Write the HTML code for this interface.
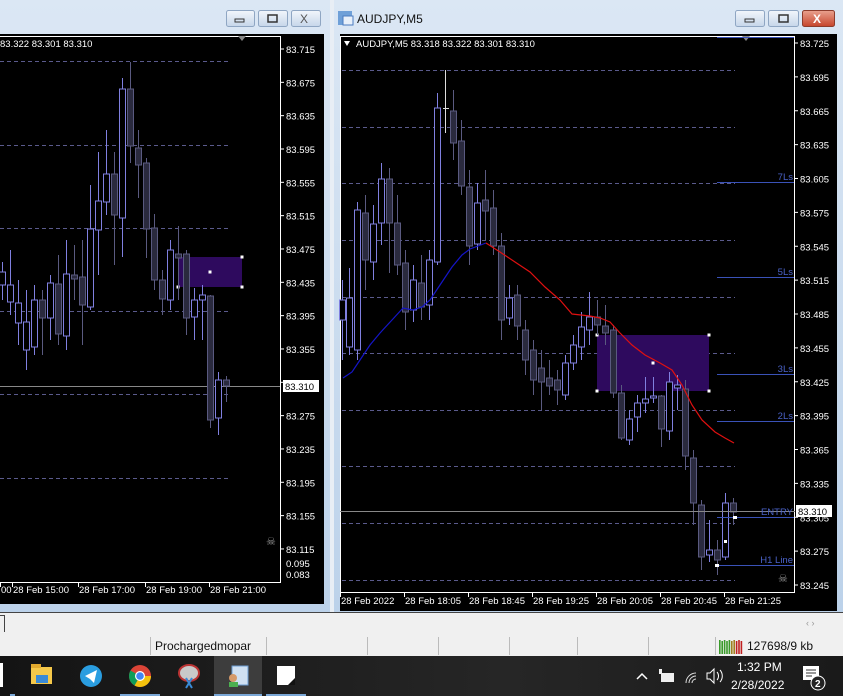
<!DOCTYPE html>
<html><head><meta charset="utf-8"><style>
html,body{margin:0;padding:0;width:843px;height:696px;overflow:hidden;background:#dfe8f2;font-family:"Liberation Sans",sans-serif;}
svg text{font-family:"Liberation Sans",sans-serif;}
</style></head><body>
<svg id="s" width="843" height="696" xmlns="http://www.w3.org/2000/svg">
<defs>
<linearGradient id="tb" x1="0" y1="0" x2="0" y2="1"><stop offset="0" stop-color="#dbe7f4"/><stop offset="1" stop-color="#bcd2ea"/></linearGradient>
<linearGradient id="btn" x1="0" y1="0" x2="0" y2="1"><stop offset="0" stop-color="#f2f6fb"/><stop offset="1" stop-color="#c6d6ea"/></linearGradient>
<linearGradient id="cls" x1="0" y1="0" x2="0" y2="1"><stop offset="0" stop-color="#e9a28f"/><stop offset="1" stop-color="#c6442b"/></linearGradient>
<linearGradient id="task" x1="0" y1="0" x2="1" y2="0"><stop offset="0" stop-color="#141414"/><stop offset="0.6" stop-color="#262626"/><stop offset="1" stop-color="#1a1a1a"/></linearGradient>
</defs>
<!-- background -->
<rect x="0" y="0" width="843" height="612" fill="#e8eef5"/>
<!-- left window -->
<rect x="0" y="0" width="330" height="612" fill="url(#tb)"/>
<rect x="0" y="34" width="324" height="570" fill="#000"/>
<g stroke="#8fa6c3" fill="url(#btn)"><rect x="226.5" y="10.5" width="28" height="16" rx="2"/><rect x="258.5" y="10.5" width="29" height="16" rx="2"/><rect x="291.5" y="10.5" width="29" height="16" rx="2"/></g>
<rect x="235" y="19" width="9" height="3" fill="none" stroke="#333"/>
<rect x="268" y="15" width="9" height="7" fill="none" stroke="#333" stroke-width="1.5"/>
<text x="300" y="23" font-size="12" fill="#555">X</text>
<!-- right window -->
<rect x="334" y="0" width="509" height="612" fill="url(#tb)"/>
<rect x="340" y="34" width="497" height="577" fill="#000"/>
<rect x="338" y="11" width="14" height="14" fill="#6fa0d8"/><rect x="343" y="16" width="10" height="9" fill="#e8f0fa" stroke="#4b7bc0"/>
<text x="357" y="23" font-size="12" fill="#111">AUDJPY,M5</text>
<g stroke="#8fa6c3"><rect x="735.5" y="10.5" width="29" height="16" rx="2" fill="url(#btn)"/><rect x="768.5" y="10.5" width="30" height="16" rx="2" fill="url(#btn)"/><rect x="802.5" y="10.5" width="32" height="16" rx="2" fill="url(#cls)" stroke="#8d3c2c"/></g>
<rect x="745" y="19" width="9" height="3" fill="none" stroke="#333"/>
<rect x="779" y="15" width="9" height="7" fill="none" stroke="#333" stroke-width="1.5"/>
<text x="813" y="23" font-size="12" font-weight="bold" fill="#fff">X</text>
<!-- left plot border -->
<polyline points="0,36.5 280.5,36.5 280.5,582.5 0,582.5" fill="none" stroke="#fff"/>
<text x="0" y="47" font-size="9.5" fill="#fff">83.322 83.301 83.310</text>
<polygon points="238,36 246,36 242,41" fill="#888"/>
<!-- right plot border -->
<rect x="340.5" y="36.5" width="454" height="556" fill="none" stroke="#fff"/>
<polygon points="344,41 350,41 347,46" fill="#fff"/>
<text x="356" y="47" font-size="9.5" fill="#fff">AUDJPY,M5  83.318 83.322 83.301 83.310</text>
<polygon points="742,36 750,36 746,41" fill="#888"/>
<g id="g"></g>
<!-- tab bar -->
<rect x="0" y="612" width="843" height="21" fill="#f0f0f0"/>
<line x1="0" y1="612.5" x2="843" y2="612.5" stroke="#444"/>
<path d="M0,615.5 H4.5 V632" fill="none" stroke="#444"/>
<text x="806" y="626" font-size="9" fill="#999">‹   ›</text>
<!-- status -->
<rect x="0" y="633" width="843" height="23" fill="#f0f0f0"/>
<g stroke="#bbb"><line x1="150.5" y1="637" x2="150.5" y2="655"/><line x1="266.5" y1="637" x2="266.5" y2="655"/><line x1="367.5" y1="637" x2="367.5" y2="655"/><line x1="438.5" y1="637" x2="438.5" y2="655"/><line x1="509.5" y1="637" x2="509.5" y2="655"/><line x1="577.5" y1="637" x2="577.5" y2="655"/><line x1="648.5" y1="637" x2="648.5" y2="655"/><line x1="715.5" y1="637" x2="715.5" y2="655"/></g>
<text x="155" y="650" font-size="12" fill="#111">Prochargedmopar</text>
<g id="bars"></g>
<text x="747" y="650" font-size="12" fill="#111">127698/9 kb</text>
<!-- taskbar -->
<rect x="0" y="656" width="843" height="40" fill="url(#task)"/>
<rect x="214" y="656" width="48" height="40" fill="#3d3d3d"/>
<rect x="0" y="663" width="3" height="24" fill="#fff"/>
<rect x="10" y="694" width="5" height="2" fill="#7aa7d6"/>
<rect x="120" y="694" width="40" height="2" fill="#7aa7d6"/><rect x="214" y="694" width="48" height="2" fill="#7aa7d6"/><rect x="266" y="694" width="40" height="2" fill="#7aa7d6"/>
<!-- explorer -->
<rect x="31" y="667" width="21" height="17" fill="#f5c84a"/><rect x="31" y="664" width="10" height="4" fill="#e2a92e"/><rect x="36" y="675" width="12" height="8" fill="#3a8ad6"/>
<!-- telegram -->
<circle cx="91" cy="676" r="11" fill="#2a9de0"/><path d="M85,676 L97,670 L94,683 L90,679 Z" fill="#fff"/>
<!-- chrome -->
<circle cx="140" cy="676" r="11" fill="#db4437"/><path d="M140,676 L151,676 A11,11 0 0 1 134.5,685.5 Z" fill="#f4c20d"/><path d="M140,676 L134.5,685.5 A11,11 0 0 1 130.5,670.5 Z" fill="#0f9d58"/><circle cx="140" cy="676" r="5" fill="#fff"/><circle cx="140" cy="676" r="3.8" fill="#4285f4"/>
<!-- snip -->
<ellipse cx="189" cy="673" rx="10" ry="8" fill="#c9c9c9" stroke="#b33" stroke-width="2"/><path d="M186,678 L192,688 M192,678 L186,688" stroke="#3a8ad6" stroke-width="2"/>
<!-- mt4 -->
<rect x="232" y="666" width="16" height="19" fill="#cfe0f2" stroke="#6b9bd1"/><circle cx="233" cy="678" r="4" fill="#d59a6a"/><rect x="229" y="682" width="9" height="5" fill="#4caf50"/>
<!-- notepad-ish -->
<rect x="277" y="666" width="18" height="19" fill="#fff"/><path d="M288,685 L295,678 L295,685 Z" fill="#111"/>
<!-- tray -->
<path d="M637,679 L642,674 L647,679" fill="none" stroke="#fff" stroke-width="1.5"/>
<rect x="661" y="673" width="13" height="9" fill="#f0f0f0"/><rect x="659" y="669" width="3" height="5" fill="#f0f0f0"/>
<path d="M686,683 A10,10 0 0 1 696,673 M689,683 A7,7 0 0 1 696,676 M692,683 A4,4 0 0 1 696,679" fill="none" stroke="#ddd" stroke-width="1"/>
<path d="M707,673 L710,673 L714,669 L714,683 L710,679 L707,679 Z" fill="none" stroke="#fff"/><path d="M717,672 A6,6 0 0 1 717,680 M720,670 A9,9 0 0 1 720,682" fill="none" stroke="#fff"/>
<text x="737" y="671" font-size="12" fill="#fff">1:32 PM</text>
<text x="731" y="689" font-size="12" fill="#fff">2/28/2022</text>
<rect x="803" y="666" width="16" height="14" fill="#fff"/><path d="M806,670 H816 M806,673 H816 M806,676 H812" stroke="#333"/>
<circle cx="818" cy="683" r="7" fill="#222" stroke="#fff"/><text x="815" y="687" font-size="10" fill="#fff" font-weight="bold">2</text>
</svg>
<script>
var g=document.getElementById('g'),NS='http://www.w3.org/2000/svg',h='';
function E(s){h+=s;}
// left grid
[61,145,228,311,394,478].forEach(function(y){E('<line x1="0" y1="'+(y+.5)+'" x2="228" y2="'+(y+.5)+'" stroke="#5a5a8c" stroke-dasharray="4,3"/>');});
// right grid
[70,127,183,240,297,353,410,466,523,580].forEach(function(y){E('<line x1="342" y1="'+(y+.5)+'" x2="735" y2="'+(y+.5)+'" stroke="#5a5a8c" stroke-dasharray="4,3"/>');});
// left axis
var lp=['83.715','83.675','83.635','83.595','83.555','83.515','83.475','83.435','83.395','83.355','83.315','83.275','83.235','83.195','83.155','83.115'];
lp.forEach(function(t,i){var y=49+i*33.33;E('<line x1="281" y1="'+y+'" x2="284" y2="'+y+'" stroke="#fff"/><text x="286" y="'+(y+4)+'" font-size="9.5" fill="#fff">'+t+'</text>');});
E('<text x="286" y="567" font-size="9.5" fill="#fff">0.095</text><text x="286" y="578" font-size="9.5" fill="#fff">0.083</text>');
// right axis
var rp=['83.725','83.695','83.665','83.635','83.605','83.575','83.545','83.515','83.485','83.455','83.425','83.395','83.365','83.335','83.305','83.275','83.245'];
rp.forEach(function(t,i){var y=43+i*33.875;E('<line x1="795" y1="'+y+'" x2="798" y2="'+y+'" stroke="#fff"/><text x="800" y="'+(y+4)+'" font-size="9.5" fill="#fff">'+t+'</text>');});
// left time
[['00',0],['28 Feb 15:00',12],['28 Feb 17:00',78],['28 Feb 19:00',145],['28 Feb 21:00',209]].forEach(function(a){E('<line x1="'+(a[1]+.5)+'" y1="583" x2="'+(a[1]+.5)+'" y2="587" stroke="#fff"/><text x="'+(a[1]+1)+'" y="593" font-size="9.5" fill="#fff">'+a[0]+'</text>');});
[['28 Feb 2022',340],['28 Feb 18:05',404],['28 Feb 18:45',468],['28 Feb 19:25',532],['28 Feb 20:05',596],['28 Feb 20:45',660],['28 Feb 21:25',724]].forEach(function(a){E('<line x1="'+(a[1]+.5)+'" y1="593" x2="'+(a[1]+.5)+'" y2="597" stroke="#fff"/><text x="'+(a[1]+1)+'" y="604" font-size="9.5" fill="#fff">'+a[0]+'</text>');});
function C(x,o,c,hi,lo){var bull=c<o;var t=Math.min(o,c),b=Math.max(o,c);if(b-t<2)b=t+2;hi=hi||t-8;lo=lo||b+8;
var col=bull?'#8080e0':'#5a5a80';E('<line x1="'+(x+.5)+'" y1="'+hi+'" x2="'+(x+.5)+'" y2="'+lo+'" stroke="'+col+'"/>');
E('<rect x="'+(x-2.5)+'" y="'+t+'" width="6" height="'+(b-t)+'" fill="'+(bull?'#000':'#2a2a3e')+'" stroke="'+col+'"/>');}
// left rect
E('<rect x="178" y="257" width="64" height="30" fill="#2e0a5e"/>');
[[178,257],[242,257],[178,287],[242,287],[210,272]].forEach(function(p){E('<rect x="'+(p[0]-1.5)+'" y="'+(p[1]-1.5)+'" width="3" height="3" fill="#fff"/>');});
E('<line x1="0" y1="386.5" x2="280" y2="386.5" stroke="#888"/><rect x="283" y="380" width="36" height="12" fill="#fff"/><text x="285" y="390" font-size="9.5" fill="#000">83.310</text>');
var L=[[2,285,272,262,300],[10,302,285,250,315],[18,323,303,280,345],[26,350,322,290,370],[34,347,300,285,355],[42,300,318,290,355],[50,318,283,275,340],[58,284,334,255,345],[66,336,274,240,350],[74,275,279,245,300],[82,277,305,240,345],[90,307,229,185,310],[98,230,201,152,275],[106,202,174,130,215],[114,174,215,152,265],[122,218,89,78,257],[130,89,146,62,163],[138,148,165,130,198],[146,163,229,158,258],[154,228,280,214,290],[162,280,299,270,315],[170,300,250,240,310],[178,254,258,226,300],[186,254,318,250,335],[194,317,300,288,340],[202,300,295,285,340],[210,296,420,295,428],[218,418,380,372,435],[226,380,386,376,402]];
L.forEach(function(a){C(a[0],a[1],a[2],a[3],a[4]);});
E('<text x="266" y="545" font-size="11" fill="#999">☠</text><text x="778" y="582" font-size="11" fill="#999">☠</text>');
// right
E('<rect x="597" y="335" width="112" height="56" fill="#2e0a5e"/>');
[[597,335],[709,335],[597,391],[709,391],[653,363]].forEach(function(p){E('<rect x="'+(p[0]-1.5)+'" y="'+(p[1]-1.5)+'" width="3" height="3" fill="#fff"/>');});
var R=[[342,320,300,280,360],[349,347,298,268,355],[357,350,210,202,360],[365,213,260,195,290],[373,262,224,205,280],[381,223,179,163,245],[389,179,223,168,273],[397,223,265,195,275],[405,263,312,250,330],[413,310,280,265,322],[421,283,307,255,320],[429,305,260,250,320],[437,262,108,93,265],[453,111,143,90,160],[461,141,186,120,195],[469,187,246,170,265],[477,244,203,183,250],[485,200,211,170,240],[493,208,246,190,255],[501,246,320,233,340],[509,318,298,285,325],[517,295,326,285,340],[525,330,360,320,375],[533,350,380,340,395],[541,368,382,350,410],[549,378,386,360,395],[557,380,390,370,405],[565,395,363,355,400],[573,363,345,335,370],[581,347,327,312,360],[589,330,317,292,345],[597,317,325,300,335],[605,326,333,305,345],[613,330,393,325,398],[621,393,438,385,440],[629,440,419,410,445],[637,417,403,395,432],[645,403,399,377,413],[653,398,396,377,403],[661,396,429,395,447],[669,431,382,372,440],[677,388,385,375,410],[685,389,456,380,470],[693,458,503,450,525],[701,505,557,500,570],[709,555,550,520,562],[717,550,560,540,575],[725,557,503,493,560],[733,503,512,498,525]];
R.forEach(function(a){C(a[0],a[1],a[2],a[3],a[4]);});
E('<line x1="445.5" y1="70" x2="445.5" y2="133" stroke="#ddd"/><line x1="443" y1="108.5" x2="449" y2="108.5" stroke="#ddd"/>');
E('<polyline points="343,378 352,372 360,360 370,345 380,333 392,320 403,308 413,310 422,307 430,300 440,285 452,267 462,255 470,249 478,246 486,243" fill="none" stroke="#1515c8" stroke-width="1.2"/>');
E('<polyline points="486,243 500,252 515,262 530,272 545,287 560,300 572,314 590,316 600,318 610,322 620,333 632,345 645,355 660,363 672,370 682,385 692,405 702,420 715,432 725,438 734,443" fill="none" stroke="#e01010" stroke-width="1.2"/>');
E('<line x1="340" y1="511.5" x2="795" y2="511.5" stroke="#888"/>');
[[37,''],[182,'7Ls'],[277,'5Ls'],[374,'3Ls'],[421,'2Ls'],[517,'ENTRY'],[565,'H1 Line']].forEach(function(a){E('<line x1="717" y1="'+(a[0]+.5)+'" x2="794" y2="'+(a[0]+.5)+'" stroke="#3a52b8"/>');if(a[1])E('<text x="793" y="'+(a[0]-2)+'" font-size="9.5" fill="#4a62c8" text-anchor="end">'+a[1]+'</text>');});
E('<rect x="796" y="505" width="36" height="12" fill="#fff"/><text x="798" y="515" font-size="9.5" fill="#000">83.310</text>');
E('<rect x="715" y="564" width="4" height="3" fill="#fff"/><rect x="733" y="516" width="4" height="3" fill="#fff"/><rect x="724" y="540" width="3" height="3" fill="#fff"/>');
g.innerHTML=h;
var b='';for(var i=0;i<10;i++){var c=i<5?'#3a9a2a':(i<7?'#a08020':'#c02020');b+='<rect x="'+(719+i*2.4)+'" y="'+(640+ (i%2))+'" width="1.6" height="'+(14-(i%2))+'" fill="'+c+'"/>';}
document.getElementById('bars').innerHTML=b;
</script>
</body></html>
